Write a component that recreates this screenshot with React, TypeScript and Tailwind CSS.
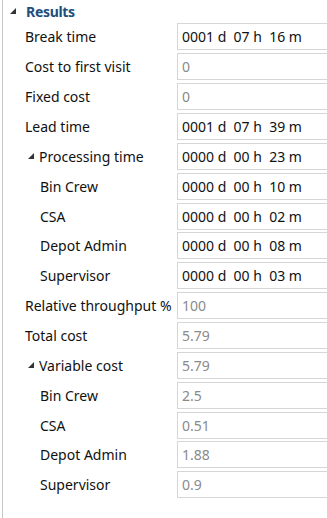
type Row = {
  label: string;
  value: string;
  depth: 0 | 1 | 2;
  expander?: boolean;
  dim?: boolean;
};

const rows: Row[] = [
  { label: "Break time", value: "0001 d  07 h  16 m", depth: 0 },
  { label: "Cost to first visit", value: "0", depth: 0, dim: true },
  { label: "Fixed cost", value: "0", depth: 0, dim: true },
  { label: "Lead time", value: "0001 d  07 h  39 m", depth: 0 },
  { label: "Processing time", value: "0000 d  00 h  23 m", depth: 1, expander: true },
  { label: "Bin Crew", value: "0000 d  00 h  10 m", depth: 2 },
  { label: "CSA", value: "0000 d  00 h  02 m", depth: 2 },
  { label: "Depot Admin", value: "0000 d  00 h  08 m", depth: 2 },
  { label: "Supervisor", value: "0000 d  00 h  03 m", depth: 2 },
  { label: "Relative throughput %", value: "100", depth: 0, dim: true },
  { label: "Total cost", value: "5.79", depth: 0, dim: true },
  { label: "Variable cost", value: "5.79", depth: 1, expander: true, dim: true },
  { label: "Bin Crew", value: "2.5", depth: 2, dim: true },
  { label: "CSA", value: "0.51", depth: 2, dim: true },
  { label: "Depot Admin", value: "1.88", depth: 2, dim: true },
  { label: "Supervisor", value: "0.9", depth: 2, dim: true },
];

const Caret = () => (
  <svg width="6" height="6" viewBox="0 0 6 6" className="shrink-0">
    <polygon points="6,0 6,6 0,6" fill="#333" />
  </svg>
);

export default function App() {
  return (
    <div className="h-[518px] w-[327px] overflow-hidden bg-white font-['Noto_Sans','Open_Sans',sans-serif] text-[14px] text-[#111]">
      <div className="ml-[2px] h-full border-l border-[#c8c8c8]">
        <div className="flex h-[22px] items-center gap-[10px] pl-[7px]">
          <Caret />
          <span className="font-bold tracking-[-0.3px] text-[#1c4f7c]">Results</span>
        </div>
        {rows.map((r, i) => (
          <div key={i} className="flex h-[29.87px] items-center">
            <div
              className={
                "flex w-[174px] shrink-0 items-center gap-[5px] whitespace-nowrap " +
                (r.depth === 0 ? "pl-[22px]" : r.depth === 1 ? "pl-[25px]" : "pl-[37px]")
              }
            >
              {r.expander ? <Caret /> : null}
              <span>{r.label}</span>
            </div>
            <div
              className={
                "flex h-[27px] w-[170px] shrink-0 items-center border border-[#d6d6d6] pl-[4px] whitespace-pre " +
                (r.dim ? "text-[#8a8a8a]" : "text-[#111]")
              }
            >
              {r.value}
            </div>
          </div>
        ))}
      </div>
    </div>
  );
}
